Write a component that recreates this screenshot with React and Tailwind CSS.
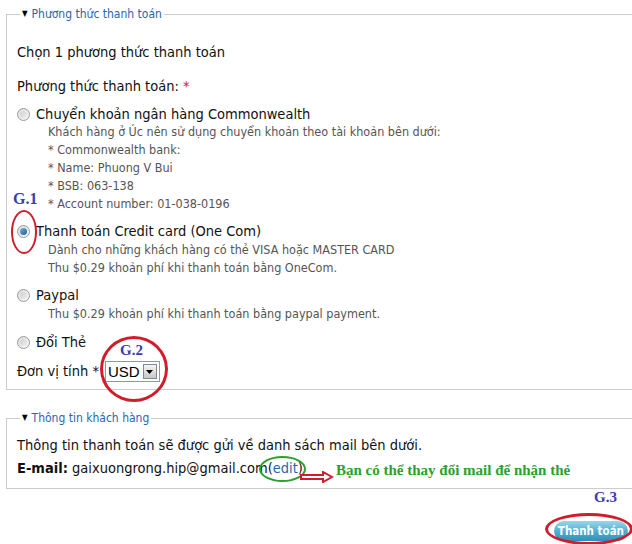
import React from "react";

function Radio({ checked }) {
  return (
    <span className="inline-flex items-center justify-center w-[13px] h-[13px] rounded-full border border-[#9a9a9a] bg-gradient-to-br from-[#dcdcdc] to-[#f8f8f8] mr-[6px] shrink-0">
      {checked ? (
        <span className="w-[7px] h-[7px] rounded-full bg-gradient-to-br from-[#6fb4e0] to-[#1b5c96]" />
      ) : (
        <span className="w-[7px] h-[7px] rounded-full bg-gradient-to-br from-[#cfcfcf] to-[#eeeeee]" />
      )}
    </span>
  );
}

function Legend({ children }) {
  return (
    <legend className="ml-[3px] px-[2px] leading-[16px] text-[12px] text-[#2f63a8] flex items-center">
      <span className="text-[8px] text-black mr-[4px]">▼</span>
      {children}
    </legend>
  );
}

export default function App() {
  const desc = "text-[12.5px] leading-[18px] text-[#555] pl-[31px]";
  const main = "text-[14.5px] leading-[18px] text-[#111] flex items-center";
  return (
    <div className="relative w-[632px] h-[544px] overflow-hidden bg-white font-['DejaVu_Sans_Condensed','DejaVu_Sans',sans-serif]">
      <fieldset className="ml-[6px] mt-[6px] w-[640px] border border-[#cccccc] pl-[10px] pb-[7px]">
        <Legend>Phương thức thanh toán</Legend>
        <div className="text-[14.5px] leading-[20px] text-[#111] mt-[20px]">Chọn 1 phương thức thanh toán</div>
        <div className="text-[14.5px] leading-[20px] text-[#111] mt-[14px]">
          Phương thức thanh toán: <span className="text-[#cc2222]">*</span>
        </div>
        <div className={main + " mt-[9px]"}>
          <Radio />
          Chuyển khoản ngân hàng Commonwealth
        </div>
        <div className={desc}>Khách hàng ở Úc nên sử dụng chuyển khoản theo tài khoản bên dưới:</div>
        <div className={desc}>* Commonwealth bank:</div>
        <div className={desc}>* Name: Phuong V Bui</div>
        <div className={desc}>* BSB: 063-138</div>
        <div className={desc}>* Account number: 01-038-0196</div>
        <div className={main + " mt-[9px]"}>
          <Radio checked />
          Thanh toán Credit card (One Com)
        </div>
        <div className={desc + " mt-[1px]"}>Dành cho những khách hàng có thẻ VISA hoặc MASTER CARD</div>
        <div className={desc}>Thu $0.29 khoản phí khi thanh toán bằng OneCom.</div>
        <div className={main + " mt-[9px]"}>
          <Radio />
          Paypal
        </div>
        <div className={desc + " mt-[1px]"}>Thu $0.29 khoản phí khi thanh toán bằng paypal payment.</div>
        <div className={main + " mt-[10px]"}>
          <Radio />
          Đổi Thẻ
        </div>
        <div className="mt-[10px] h-[21px] flex items-center text-[14.5px] text-[#111]">
          <span>Đơn vị tính *</span>
          <span className="ml-[6px] h-[21px] w-[55px] border border-[#7f9db9] bg-white flex items-center justify-between pl-[2px] pr-[2px]">
            <span className="text-[15px] font-['Liberation_Sans',sans-serif] text-black leading-[19px]">USD</span>
            <span className="w-[14px] h-[15px] border border-[#888] bg-gradient-to-b from-[#f4f4f4] to-[#c8c8c8] flex items-center justify-center">
              <svg width="7" height="4" viewBox="0 0 7 4"><path d="M0 0h7L3.5 4z" fill="#000" /></svg>
            </span>
          </span>
        </div>
      </fieldset>

      <fieldset className="ml-[6px] mt-[20px] w-[640px] border border-[#cccccc] pl-[10px] pb-[11px]">
        <Legend>Thông tin khách hàng</Legend>
        <div className="text-[14.5px] leading-[18px] text-[#111] mt-[10px]">
          Thông tin thanh toán sẽ được gửi về danh sách mail bên dưới.
        </div>
        <div className="text-[14.5px] leading-[18px] text-[#111] mt-[5px]">
          <span className="font-bold">E-mail:</span> gaixuongrong.hip@gmail.com(<span className="text-[#2f63a8]">edit</span>)
        </div>
      </fieldset>

      <div className="flex justify-end pr-[4px] mt-[32px]">
        <button className="h-[20px] px-[4px] rounded-full bg-gradient-to-b from-[#9bd6ea] via-[#4fb0d2] to-[#2f8fb8] text-white font-bold text-[11.5px] leading-[20px] font-['DejaVu_Sans_Condensed','DejaVu_Sans',sans-serif]">
          Thanh toán
        </button>
      </div>

      {/* annotations */}
      <div className="absolute left-[13px] top-[190px] font-['Liberation_Serif',serif] font-bold text-[16px] text-[#3b3bb0] leading-[18px]">G.1</div>
      <div className="absolute left-[11px] top-[210px] w-[26px] h-[44px] rounded-[50%] border-2 border-[#d21c2a]" />
      <div className="absolute left-[120px] top-[341px] font-['Liberation_Serif',serif] font-bold text-[15px] text-[#3b3bb0] leading-[18px]">G.2</div>
      <div className="absolute left-[100px] top-[336px] w-[68px] h-[66px] rounded-[50%] border-[3px] border-[#d21c2a]" />
      <div className="absolute left-[259px] top-[456px] w-[47px] h-[26px] rounded-[50%] border-2 border-[#2ca02c]" />
      <svg className="absolute left-[300px] top-[471px]" width="34" height="12" viewBox="0 0 34 12">
        <path d="M1 4h22V1l9 5-9 5V8H1z" fill="#fff" stroke="#d21c2a" strokeWidth="2" />
      </svg>
      <div className="absolute left-[336px] top-[461px] font-['Liberation_Serif',serif] font-bold text-[15px] text-[#2ca02c] leading-[18px]">Bạn có thể thay đổi mail để nhận thẻ</div>
      <div className="absolute left-[594px] top-[488px] font-['Liberation_Serif',serif] font-bold text-[15px] text-[#3b3bb0] leading-[18px]">G.3</div>
      <div className="absolute left-[545px] top-[513px] w-[88px] h-[32px] rounded-[50%] border-[3px] border-[#d21c2a]" />
    </div>
  );
}
